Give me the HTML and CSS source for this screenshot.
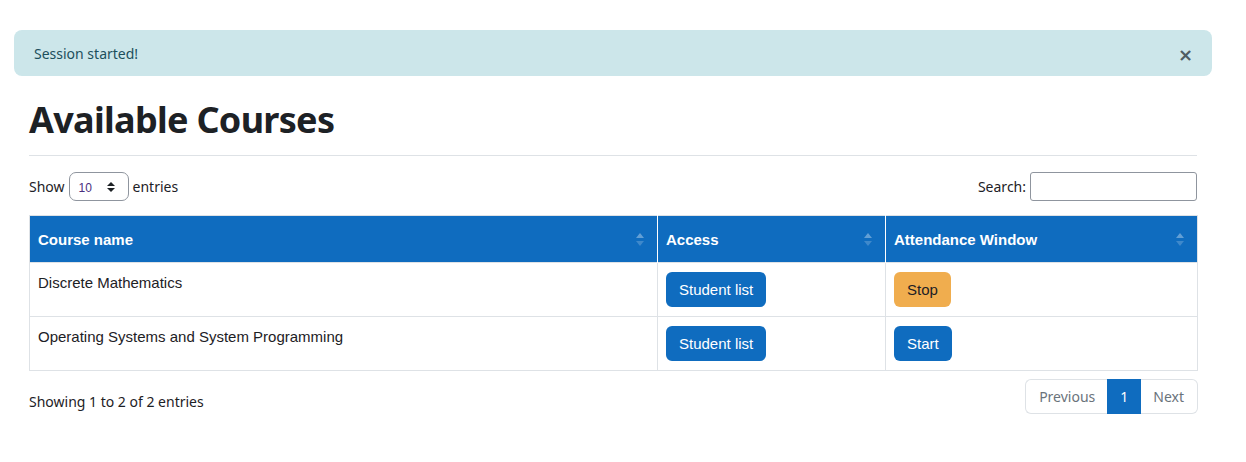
FILE: index.html
```html
<!DOCTYPE html>
<html>
<head>
<meta charset="utf-8">
<link rel="stylesheet" href="styles.css">
</head>
<body>
<div class="page">
  <div class="alert">
    <span>Session started!</span>
    <button class="close" aria-label="Close">×</button>
  </div>
  <div class="content">
    <h1 class="title">Available Courses</h1>
    <hr class="rule">
    <div class="controls">
      <label class="length">Show
        <span class="select"><span class="select-val">10</span>
          <svg width="10" height="12" viewBox="0 0 10 12"><path d="M5 1 L9 5 H1 Z M5 11 L9 7 H1 Z" fill="#1d2125"/></svg>
        </span>
        entries</label>
      <label class="search">Search: <input type="text" class="search-input"></label>
    </div>
    <table class="grid">
      <thead>
        <tr>
          <th class="c1">Course name<span class="sort"></span></th>
          <th class="c2">Access<span class="sort"></span></th>
          <th class="c3">Attendance Window<span class="sort"></span></th>
        </tr>
      </thead>
      <tbody>
        <tr>
          <td>Discrete Mathematics</td>
          <td><button class="btn btn-primary">Student list</button></td>
          <td><button class="btn btn-warning">Stop</button></td>
        </tr>
        <tr>
          <td>Operating Systems and System Programming</td>
          <td><button class="btn btn-primary">Student list</button></td>
          <td><button class="btn btn-primary">Start</button></td>
        </tr>
      </tbody>
    </table>
    <div class="footer">
      <div class="info">Showing 1 to 2 of 2 entries</div>
      <div class="pager">
        <span class="pg first">Previous</span>
        <span class="pg active">1</span>
        <span class="pg last">Next</span>
      </div>
    </div>
  </div>
</div>
</body>
</html>
```
FILE: styles.css
```css
* { box-sizing: border-box; }
body {
  margin: 0;
  font-family: "Noto Sans", "Open Sans", sans-serif;
  font-size: 14px;
  color: #1d2125;
  background: #fff;
}
.page {
  width: 1198px;
  margin-left: 14px;
  padding-top: 30px;
}
.alert {
  display: flex;
  align-items: center;
  justify-content: space-between;
  height: 46px;
  padding: 0 20px;
  background: #cce6ea;
  color: #1c4f5c;
  border-radius: 8px;
  font-size: 14px;
}
.close {
  border: 0;
  background: transparent;
  font-family: "DejaVu Sans", sans-serif;
  font-size: 18px;
  font-weight: bold;
  color: #4f5d62;
  padding: 0;
  margin-right: -1px;
  margin-top: 3px;
  line-height: 1;
}
.content {
  padding: 0 15px;
}
.title {
  margin: 22px 0 0;
  font-size: 36px;
  font-weight: 700;
  line-height: 44px;
  letter-spacing: -0.7px;
  color: #1d2125;
}
.rule {
  margin: 13px 0 0;
  border: 0;
  border-top: 1px solid #dee2e6;
}
.controls {
  display: flex;
  justify-content: space-between;
  align-items: center;
  margin-top: 16px;
  height: 29px;
}
.length {
  display: flex;
  align-items: center;
  gap: 4px;
}
.select {
  display: inline-flex;
  align-items: center;
  justify-content: space-between;
  width: 60px;
  height: 29px;
  padding: 0 12px 0 9px;
  border: 1px solid #8f959e;
  border-radius: 7px;
  font-family: "Liberation Sans", Arial, sans-serif;
  font-size: 12px;
  color: #4a2f7e;
}
.select-val { padding-top: 3px; }
.search {
  display: flex;
  align-items: center;
  gap: 4px;
}
.search-input {
  width: 167px;
  height: 29px;
  border: 1px solid #8f959e;
  border-radius: 3px;
  margin: 0;
}
.grid {
  width: 1169px;
  margin-top: 14px;
  border-collapse: collapse;
  font-family: "Liberation Sans", Arial, sans-serif;
  font-size: 15px;
  border: 1px solid #dee2e6;
}
.grid th {
  position: relative;
  background: #0f6cbf;
  color: #fff;
  text-align: left;
  font-weight: bold;
  height: 47px;
  padding: 0 8px;
  border-left: 1px solid #fff;
  border-right: 1px solid #fff;
}
.grid th:first-child { border-left-color: #dee2e6; }
.grid th:last-child { border-right-color: #dee2e6; }
.c1 { width: 628px; }
.c2 { width: 228px; }
.sort {
  position: absolute;
  right: 13px;
  top: 17px;
  width: 8px;
  height: 13px;
}
.sort::before, .sort::after {
  content: "";
  position: absolute;
  left: 0;
  border-left: 4px solid transparent;
  border-right: 4px solid transparent;
}
.sort::before { top: 0; border-bottom: 5px solid rgba(255,255,255,0.35); }
.sort::after { bottom: 0; border-top: 5px solid rgba(255,255,255,0.2); }
.grid td {
  vertical-align: top;
  height: 54px;
  padding: 9px 8px;
  border: 1px solid #dee2e6;
  color: #1d2125;
  line-height: 22px;
}
.btn {
  border: 1px solid transparent;
  border-radius: 6px;
  padding: 6px 12px;
  font-family: "Liberation Sans", Arial, sans-serif;
  font-size: 15px;
  line-height: 21px;
  margin: 0;
}
.btn-primary { background: #0f6cbf; color: #fff; }
.btn-warning { background: #f0ad4e; color: #1d2125; }
.footer {
  display: flex;
  justify-content: space-between;
  align-items: center;
  margin-top: 8px;
  width: 1169px;
}
.info { padding-top: 9px; }
.pager {
  display: flex;
  height: 35px;
}
.pg {
  display: flex;
  align-items: center;
  padding: 0 12px;
  border: 1px solid #dee2e6;
  color: #6a737b;
  font-size: 14px;
}
.pg.first { border-radius: 6px 0 0 6px; border-right: 0; padding: 0 12px 0 13px; }
.pg.last { border-radius: 0 6px 6px 0; border-left: 0; padding: 0 13px 0 12px; }
.pg.active { background: #0f6cbf; border-color: #0f6cbf; color: #fff; padding: 0 12px; }
```
